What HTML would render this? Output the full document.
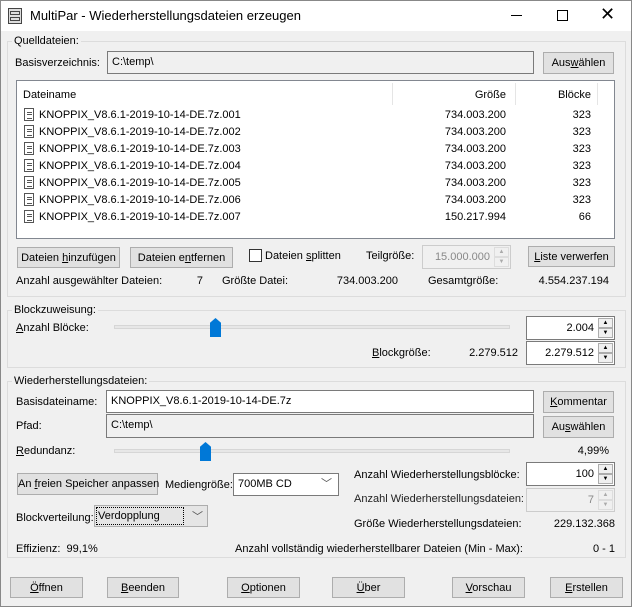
<!DOCTYPE html>
<html><head><meta charset="utf-8"><style>
*{box-sizing:border-box;margin:0;padding:0}
body{width:632px;height:607px;overflow:hidden;background:#f0f0f0;font-family:"Liberation Sans",sans-serif;font-size:11px;color:#000;position:relative}
.a{position:absolute;white-space:nowrap}
.win{position:absolute;left:0;top:0;width:632px;height:607px;border:1px solid #888;border-top:none}
.title{position:absolute;left:0;top:0;width:632px;height:31px;background:#fff;border:1px solid #888;border-bottom:none}
.grp{position:absolute;border:1px solid #dcdcdc}
.gl{position:absolute;background:#f0f0f0;padding:0 2px;font-size:11px}
.btn{position:absolute;background:#e1e1e1;border:1px solid #adadad;text-align:center;line-height:20px;white-space:nowrap}
.tb{position:absolute;border:1px solid #7a7a7a;background:#fff;padding-left:4px;line-height:21px;white-space:nowrap}
.tbg{background:#f0f0f0}
.r{text-align:right}
u{text-decoration:underline}
.spin{position:absolute;border:1px solid #7a7a7a;background:#fff}
.spin .v{position:absolute;right:20px;top:5px}
.sb{position:absolute;right:1px;width:15px;height:10px;background:#f0f0f0;border:1px solid #adadad;font-size:6px;text-align:center;line-height:8px;color:#000}
.track{position:absolute;height:4px;background:#e7e7e7;border:1px solid #d6d6d6}
.thumb{position:absolute;width:11px;height:19px;background:#0078d7;clip-path:polygon(50% 0,100% 25%,100% 100%,0 100%,0 25%)}
.fi{position:absolute;width:10px;height:13px;border:1px solid #555;background:#fff}
.fi:before{content:"";position:absolute;left:2px;top:3px;width:5px;height:5px;border-top:1px solid #555;border-bottom:1px solid #555}
.fi:after{content:"";position:absolute;left:2px;top:5px;width:5px;border-top:1px solid #555}
</style></head><body>
<div class="win"></div>
<div class="title"></div>
<div class="a" style="left:8px;top:8px;width:14px;height:16px;border:1px solid #444;background:#ddd"></div>
<div class="a" style="left:10px;top:11px;width:10px;height:4px;border:1px solid #444"></div>
<div class="a" style="left:10px;top:17px;width:10px;height:4px;border:1px solid #444"></div>
<div class="a" style="left:30px;top:8px;font-size:13px">MultiPar - Wiederherstellungsdateien erzeugen</div>
<div class="a" style="left:511px;top:15px;width:11px;border-top:1px solid #000"></div>
<div class="a" style="left:557px;top:10px;width:11px;height:11px;border:1px solid #000"></div>
<div class="a" style="left:600px;top:4px;font-size:18px;font-weight:300">✕</div>

<div class="grp" style="left:7px;top:41px;width:619px;height:256px"></div>
<div class="gl" style="left:12px;top:35px">Quelldateien:</div>
<div class="a" style="left:15px;top:57px">Basisverzeichnis:</div>
<div class="tb tbg" style="left:107px;top:51px;width:427px;height:23px">C:\temp\</div>
<div class="btn" style="left:543px;top:52px;width:71px;height:22px">Aus<u>w</u>ählen</div>
<div class="a" style="left:16px;top:80px;width:599px;height:159px;background:#fff;border:1px solid #828790"></div>
<div class="a" style="left:23px;top:89px">Dateiname</div>
<div class="a" style="left:392px;top:83px;height:22px;border-left:1px solid #e5e5e5"></div>
<div class="a" style="left:515px;top:83px;height:22px;border-left:1px solid #e5e5e5"></div>
<div class="a" style="left:597px;top:83px;height:22px;border-left:1px solid #e5e5e5"></div>
<div class="a r" style="left:420px;top:89px;width:86px">Größe</div>
<div class="a r" style="left:520px;top:89px;width:71px">Blöcke</div>

<div class="fi" style="left:24px;top:108px"></div><div class="a" style="left:39px;top:109px">KNOPPIX_V8.6.1-2019-10-14-DE.7z.001</div><div class="a r" style="left:400px;top:109px;width:106px">734.003.200</div><div class="a r" style="left:540px;top:109px;width:51px">323</div>
<div class="fi" style="left:24px;top:125px"></div><div class="a" style="left:39px;top:126px">KNOPPIX_V8.6.1-2019-10-14-DE.7z.002</div><div class="a r" style="left:400px;top:126px;width:106px">734.003.200</div><div class="a r" style="left:540px;top:126px;width:51px">323</div>
<div class="fi" style="left:24px;top:142px"></div><div class="a" style="left:39px;top:143px">KNOPPIX_V8.6.1-2019-10-14-DE.7z.003</div><div class="a r" style="left:400px;top:143px;width:106px">734.003.200</div><div class="a r" style="left:540px;top:143px;width:51px">323</div>
<div class="fi" style="left:24px;top:159px"></div><div class="a" style="left:39px;top:160px">KNOPPIX_V8.6.1-2019-10-14-DE.7z.004</div><div class="a r" style="left:400px;top:160px;width:106px">734.003.200</div><div class="a r" style="left:540px;top:160px;width:51px">323</div>
<div class="fi" style="left:24px;top:176px"></div><div class="a" style="left:39px;top:177px">KNOPPIX_V8.6.1-2019-10-14-DE.7z.005</div><div class="a r" style="left:400px;top:177px;width:106px">734.003.200</div><div class="a r" style="left:540px;top:177px;width:51px">323</div>
<div class="fi" style="left:24px;top:193px"></div><div class="a" style="left:39px;top:194px">KNOPPIX_V8.6.1-2019-10-14-DE.7z.006</div><div class="a r" style="left:400px;top:194px;width:106px">734.003.200</div><div class="a r" style="left:540px;top:194px;width:51px">323</div>
<div class="fi" style="left:24px;top:210px"></div><div class="a" style="left:39px;top:211px">KNOPPIX_V8.6.1-2019-10-14-DE.7z.007</div><div class="a r" style="left:400px;top:211px;width:106px">150.217.994</div><div class="a r" style="left:540px;top:211px;width:51px">66</div>

<div class="btn" style="left:17px;top:247px;width:103px;height:21px">Dateien <u>h</u>inzufügen</div>
<div class="btn" style="left:130px;top:247px;width:103px;height:21px">Dateien e<u>n</u>tfernen</div>
<div class="a" style="left:249px;top:249px;width:13px;height:13px;border:1px solid #333;background:#fff"></div>
<div class="a" style="left:265px;top:250px">Dateien <u>s</u>plitten</div>
<div class="a" style="left:366px;top:250px">Teilgröße:</div>
<div class="spin" style="left:422px;top:245px;width:89px;height:24px;background:#f0f0f0;border-color:#ccc;color:#888"><span class="v">15.000.000</span><div class="sb" style="top:1px;border-color:#ddd;color:#aaa">▲</div><div class="sb" style="top:11px;border-color:#ddd;color:#aaa">▼</div></div>
<div class="btn" style="left:528px;top:246px;width:87px;height:21px"><u>L</u>iste verwerfen</div>
<div class="a" style="left:16px;top:275px">Anzahl ausgewählter Dateien:</div>
<div class="a r" style="left:180px;top:275px;width:23px">7</div>
<div class="a" style="left:222px;top:275px">Größte Datei:</div>
<div class="a r" style="left:300px;top:275px;width:98px">734.003.200</div>
<div class="a" style="left:428px;top:275px">Gesamtgröße:</div>
<div class="a r" style="left:500px;top:275px;width:109px">4.554.237.194</div>

<div class="grp" style="left:7px;top:310px;width:619px;height:58px"></div>
<div class="gl" style="left:12px;top:304px">Blockzuweisung:</div>
<div class="a" style="left:16px;top:322px"><u>A</u>nzahl Blöcke:</div>
<div class="track" style="left:114px;top:325px;width:396px"></div>
<div class="thumb" style="left:210px;top:318px"></div>
<div class="spin" style="left:526px;top:316px;width:89px;height:24px"><span class="v">2.004</span><div class="sb" style="top:1px">▲</div><div class="sb" style="top:11px">▼</div></div>
<div class="a" style="left:372px;top:347px"><u>B</u>lockgröße:</div>
<div class="a r" style="left:440px;top:347px;width:78px">2.279.512</div>
<div class="spin" style="left:526px;top:341px;width:89px;height:24px"><span class="v">2.279.512</span><div class="sb" style="top:1px">▲</div><div class="sb" style="top:11px">▼</div></div>

<div class="grp" style="left:7px;top:381px;width:619px;height:177px"></div>
<div class="gl" style="left:12px;top:375px">Wiederherstellungsdateien:</div>
<div class="a" style="left:16px;top:396px">Basisdateiname:</div>
<div class="tb" style="left:106px;top:390px;width:428px;height:23px">KNOPPIX_V8.6.1-2019-10-14-DE.7z</div>
<div class="btn" style="left:543px;top:391px;width:71px;height:22px"><u>K</u>ommentar</div>
<div class="a" style="left:16px;top:420px">Pfad:</div>
<div class="tb tbg" style="left:106px;top:414px;width:428px;height:24px">C:\temp\</div>
<div class="btn" style="left:543px;top:416px;width:71px;height:22px">Au<u>s</u>wählen</div>
<div class="a" style="left:16px;top:445px"><u>R</u>edundanz:</div>
<div class="track" style="left:114px;top:449px;width:396px"></div>
<div class="thumb" style="left:200px;top:442px"></div>
<div class="a r" style="left:540px;top:445px;width:69px">4,99%</div>

<div class="btn" style="left:17px;top:473px;width:141px;height:22px">An <u>f</u>reien Speicher anpassen</div>
<div class="a" style="left:165px;top:479px">Mediengröße:</div>
<div class="tb" style="left:233px;top:473px;width:106px;height:23px">700MB CD<span class="a" style="right:6px;top:0;color:#555">﹀</span></div>
<div class="a" style="left:354px;top:469px">Anzahl Wiederherstellungsblöcke:</div>
<div class="spin" style="left:526px;top:462px;width:89px;height:24px"><span class="v">100</span><div class="sb" style="top:1px">▲</div><div class="sb" style="top:11px">▼</div></div>
<div class="a" style="left:354px;top:493px;color:#222">Anzahl Wiederherstellungsdateien:</div>
<div class="spin" style="left:526px;top:488px;width:89px;height:24px;background:#f0f0f0;border-color:#ccc;color:#888"><span class="v">7</span><div class="sb" style="top:1px;border-color:#ddd;color:#aaa">▲</div><div class="sb" style="top:11px;border-color:#ddd;color:#aaa">▼</div></div>
<div class="a" style="left:16px;top:512px">Blockverteilung:</div>
<div class="a" style="left:94px;top:505px;width:114px;height:22px;background:#e5e5e5;border:1px solid #adadad"></div>
<div class="a" style="left:96px;top:507px;width:88px;height:18px;border:1px dotted #000;padding-left:1px;line-height:17px">Verdopplung</div>
<div class="a" style="left:192px;top:508px;color:#555">﹀</div>
<div class="a" style="left:354px;top:518px">Größe Wiederherstellungsdateien:</div>
<div class="a r" style="left:500px;top:518px;width:115px">229.132.368</div>
<div class="a" style="left:16px;top:543px">Effizienz:&nbsp; 99,1%</div>
<div class="a" style="left:235px;top:543px">Anzahl vollständig wiederherstellbarer Dateien (Min - Max):</div>
<div class="a r" style="left:560px;top:543px;width:55px">0 - 1</div>

<div class="btn" style="left:10px;top:577px;width:73px;height:21px"><u>Ö</u>ffnen</div>
<div class="btn" style="left:107px;top:577px;width:72px;height:21px"><u>B</u>eenden</div>
<div class="btn" style="left:227px;top:577px;width:73px;height:21px"><u>O</u>ptionen</div>
<div class="btn" style="left:332px;top:577px;width:73px;height:21px"><u>Ü</u>ber</div>
<div class="btn" style="left:452px;top:577px;width:73px;height:21px"><u>V</u>orschau</div>
<div class="btn" style="left:550px;top:577px;width:73px;height:21px"><u>E</u>rstellen</div>
</body></html>
